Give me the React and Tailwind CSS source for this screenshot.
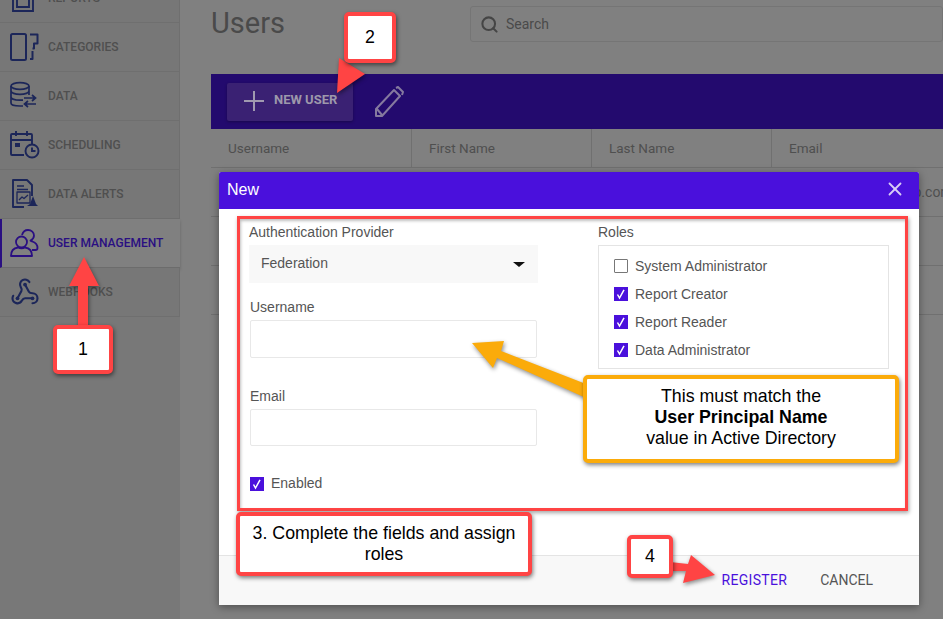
import { Search, X } from "lucide-react";

const ICON = "#1c2659";

function CategoriesIcon() {
  return (
    <svg width="30" height="30" viewBox="0 0 30 30" fill="none" stroke={ICON} strokeWidth="2" strokeLinejoin="round">
      <rect x="1" y="2" width="15" height="26" rx="1.500" />
      <path d="M20 2.500h7.500v9H24v5h-1.500M22.500 19v8h-2.500" />
    </svg>
  );
}

function DataIcon() {
  return (
    <svg width="30" height="30" viewBox="0 0 30 30" fill="none" stroke={ICON} strokeWidth="1.700">
      <ellipse cx="10" cy="5" rx="9" ry="3.400" />
      <path d="M1 5v5c0 1.900 4 3.400 9 3.400s9-1.500 9-3.400V5M1 10v6c0 1.900 4 3.200 9 3.200h3M19 10v4M1 16v6c0 1.900 4 3 9 3h3" />
      <path d="M14 17h11M22 14l3.500 3-3.500 3M26 23H15M18 20l-3.500 3 3.500 3" />
    </svg>
  );
}

function SchedulingIcon() {
  return (
    <svg width="30" height="30" viewBox="0 0 30 30" fill="none" stroke={ICON} strokeWidth="1.900">
      <path d="M14 25H2a1 1 0 0 1-1-1V5a1 1 0 0 1 1-1h19a1 1 0 0 1 1 1v9M1 10h21M6 1v5M17 1v5" />
      <rect x="5" y="13" width="5" height="4" fill={ICON} stroke="none" />
      <circle cx="22" cy="21" r="6.500" />
      <path d="M22 17.500V21h3.500" />
    </svg>
  );
}

function AlertsIcon() {
  return (
    <svg width="30" height="30" viewBox="0 0 30 30" fill="none" stroke={ICON} strokeWidth="1.900" strokeLinejoin="round">
      <path d="M14 28H3V1h14l5 5v11" />
      <path d="M7 7h7M7 10.500h11" strokeWidth="1.300" />
      <rect x="7" y="13" width="13" height="11" strokeWidth="1.300" />
      <path d="M9 21l3-3 2 1.500 4-3.500" strokeWidth="1.300" />
      <path d="M23 17l3 8 2 2H17l3-2z" fill={ICON} stroke="none" />
    </svg>
  );
}

function UsersIcon() {
  return (
    <svg width="30" height="30" viewBox="0 0 30 30" fill="none" stroke="#2a0f82" strokeWidth="1.800" strokeLinejoin="round">
      <circle cx="11.500" cy="14" r="5.500" />
      <path d="M1 28c0-5 3-8 7-8.500 2 1 5 1 7 0 4 .5 7 3.500 7 8.500z" />
      <path d="M12 7c1-3.500 3.500-5 6-5 3.500 0 6 2.500 6 5.500 0 2.500-1.500 4-3.500 5 1 1 1 .8 2 1 3 1 5 3.500 5 6.500 0 1.500-1 2-2 2h-3.500" />
    </svg>
  );
}

function WebhooksIcon() {
  return (
    <svg width="30" height="30" viewBox="0 0 24 24" fill="none" stroke={ICON} strokeWidth="1.700" strokeLinecap="round">
      <path d="M18 16.980h-5.990c-1.100 0-1.950.940-2.480 1.900A4 4 0 0 1 2 17c.010-.700.200-1.400.570-2" />
      <path d="m6 17 3.130-5.780c.530-.970.100-2.180-.500-3.100a4 4 0 1 1 6.890-4.060" />
      <path d="m12 6 3.130 5.730C15.660 12.700 16.900 13 18 13a4 4 0 0 1 0 8" />
      <circle cx="6" cy="17" r="1.500" fill={ICON} stroke="none" />
      <circle cx="18" cy="17" r="1.500" fill={ICON} stroke="none" />
      <circle cx="12" cy="6" r="1.500" fill={ICON} stroke="none" />
    </svg>
  );
}

function ReportsIcon() {
  return (
    <svg width="30" height="30" viewBox="0 0 30 30" fill="none" stroke={ICON} strokeWidth="1.900">
      <path d="M3 1h17l3 3v24H3zM7 10h12v14H7z" />
    </svg>
  );
}

const navItems = [
  { label: "REPORTS", icon: ReportsIcon },
  { label: "CATEGORIES", icon: CategoriesIcon },
  { label: "DATA", icon: DataIcon },
  { label: "SCHEDULING", icon: SchedulingIcon },
  { label: "DATA ALERTS", icon: AlertsIcon },
  { label: "USER MANAGEMENT", icon: UsersIcon, active: true },
  { label: "WEBHOOKS", icon: WebhooksIcon },
];

const columns = [
  { label: "Username", width: "w-[201px]" },
  { label: "First Name", width: "w-[180px]" },
  { label: "Last Name", width: "w-[180px]" },
  { label: "Email", width: "w-[180px]" },
];

const roles = [
  { label: "System Administrator", checked: false },
  { label: "Report Creator", checked: true },
  { label: "Report Reader", checked: true },
  { label: "Data Administrator", checked: true },
];

function Checkbox({ checked }) {
  if (!checked) {
    return <span className="w-[14px] h-[14px] border border-[#777777] bg-white rounded-[1px]" />;
  }
  return (
    <span className="w-[14px] h-[14px] bg-[#4a10dc] flex items-center justify-center">
      <svg width="14" height="14" viewBox="0 0 14 14" fill="none" stroke="white" strokeWidth="1.500">
        <path d="M3.500 7.500l2 3.500L10 2.800" />
      </svg>
    </span>
  );
}

function Callout({ className, color = "red", children }) {
  return (
    <div
      className={`absolute bg-white border-4 rounded-[5px] flex items-center justify-center text-center text-black shadow-[1px_2px_4px_rgba(0,0,0,0.5)] font-["Liberation_Sans",sans-serif] text-[17.800px] leading-[21px] ${
        color === "red" ? "border-[#ff4444]" : "border-[#fbab0a]"
      } ${className}`}
    >
      {children}
    </div>
  );
}

export default function App() {
  return (
    <div className='relative w-[943px] h-[619px] overflow-hidden flex bg-[#808080] font-["Roboto",sans-serif]'>
      {/* Sidebar */}
      <div className="w-[180px] shrink-0 bg-[#787878]">
        <div className="-mt-[26px]">
          {navItems.map((item) => (
            <div
              key={item.label}
              className={`h-[49px] flex items-center gap-[8px] border-b ${
                item.active
                  ? "border-l-2 border-l-[#2a0f82] border-b-[#6c6c6c] bg-[#808080] pl-[8px] shadow-[0_2px_3px_rgba(0,0,0,0.2)]"
                  : "border-[#6f6f6f] bg-[#777777] pl-[10px] border-r border-r-[#6f6f6f]"
              }`}
            >
              <item.icon />
              <span
                className={`text-[12px] font-medium ${
                  item.active ? "text-[#2a0f82]" : "text-[#4f4f4f]"
                }`}
              >
                {item.label}
              </span>
            </div>
          ))}
        </div>
      </div>

      {/* Main */}
      <div className="flex-1 min-w-0 pl-[31px] pt-[6px]">
        <div className="flex items-center h-[36px]">
          <h1 className="w-[259px] shrink-0 text-[29px] text-[#4a4a4a]">Users</h1>
          <div className="flex-1 h-[36px] border border-[#757575] rounded-[3px] flex items-center pl-[9px] gap-[7px] text-[14px] text-[#4a4a4a]">
            <Search size={19} strokeWidth={2.600} className="text-[#454545]" />
            <span>Search</span>
          </div>
        </div>

        <div className="mt-[32px] h-[55px] bg-[#230a6e] flex items-center pl-[16px] gap-[21px]">
          <div className="w-[126px] h-[38px] bg-[#3a2173] rounded-[2px] flex items-center pl-[17px] gap-[10px] shadow-[0_1px_3px_rgba(0,0,0,0.3)]">
            <svg width="20" height="20" viewBox="0 0 20 20" stroke="#a09ab0" strokeWidth="2" className="-mt-[2px]">
              <path d="M10 0v20M0 10h20" />
            </svg>
            <span className="text-[13px] font-bold text-[#9d98ab] whitespace-nowrap -mt-[3px]">NEW USER</span>
          </div>
          <svg width="30" height="32" viewBox="0 0 30 32" fill="none" stroke="#85799f" strokeWidth="2" strokeLinejoin="round">
            <path d="M2 30v-7L20 4l6 6L8 30zM3 23l5 6M22 2l2-1 5 5-1 3" />
          </svg>
        </div>

        <div className="flex h-[39px] border-b border-[#707070] text-[13.500px] text-[#4f4f4f]">
          {columns.map((col) => (
            <div key={col.label} className={`${col.width} shrink-0 flex items-center pl-[17px] border-r border-[#707070]`}>
              {col.label}
            </div>
          ))}
        </div>
        {[0, 1, 2].map((row) => (
          <div key={row} className="h-[49px] border-b border-[#707070] flex items-center pl-[578px] text-[14px] text-[#4f4f4f] whitespace-nowrap">
            {row === 0 ? "admin@examplecorp.com" : ""}
          </div>
        ))}
      </div>

      {/* Modal */}
      <div className='absolute left-[219px] top-[172px] w-[700px] h-[433px] bg-white flex flex-col rounded-t-[2px] shadow-[0_2px_8px_rgba(0,0,0,0.4)] font-["Liberation_Sans",sans-serif]'>
        <div className="h-[37px] shrink-0 bg-[#4a10dc] flex items-center justify-between pl-[8px] pr-[13px] text-white rounded-t-[2px]">
          <span className="text-[16px] -mt-[1px]">New</span>
          <X size={22} strokeWidth={2} className="text-[#d8ccf6] -mt-[3px]" />
        </div>

        <div className="flex-1 flex pt-[15px] pl-[30px] text-[14px] text-[#555555]">
          <div className="w-[289px] shrink-0">
            <label className="block leading-[16px]">Authentication Provider</label>
            <div className="mt-[5px] h-[38px] bg-[#f8f8f8] flex items-center justify-between pl-[12px] pr-[13px]">
              <span className="-mt-[2px]">Federation</span>
              <svg width="12" height="5" viewBox="0 0 12 5" fill="#111111"><path d="M0 0h12L6 5z" /></svg>
            </div>
            <label className="block mt-[16px] ml-[1px] leading-[16px]">Username</label>
            <div className="mt-[5px] ml-[1px] mr-[1px] h-[38px] border border-[#e8e8e8] rounded-[2px]" />
            <label className="block mt-[30px] ml-[1px] leading-[16px]">Email</label>
            <div className="mt-[5px] ml-[1px] mr-[1px] h-[37px] border border-[#e8e8e8] rounded-[2px]" />
            <div className="mt-[27px] ml-[1px] flex items-center gap-[7px]">
              <Checkbox checked />
              <span>Enabled</span>
            </div>
          </div>
          <div className="ml-[60px] w-[291px] shrink-0">
            <label className="block leading-[16px]">Roles</label>
            <div className="mt-[5px] h-[124px] border border-[#e4e4e4] pl-[15px] pt-[13px] flex flex-col gap-[14px]">
              {roles.map((role) => (
                <div key={role.label} className="flex items-center gap-[7px] h-[14px]">
                  <Checkbox checked={role.checked} />
                  <span>{role.label}</span>
                </div>
              ))}
            </div>
          </div>
        </div>

        <div className="h-[50px] shrink-0 bg-[#f8f8f8] border-t border-[#e4e4e4] flex items-center justify-end pr-[46px] gap-[33px] text-[14px] font-['Roboto',sans-serif]">
          <span className="text-[#4a10dc] tracking-[0.300px]">REGISTER</span>
          <span className="text-[#555555]">CANCEL</span>
        </div>
      </div>

      {/* Annotations */}
      <div className="absolute left-[237px] top-[216px] w-[671px] h-[295px] border-[3px] border-[#ff4444] shadow-[1px_2px_4px_rgba(0,0,0,0.35),inset_1px_2px_3px_rgba(0,0,0,0.25)]" />

      <svg className="absolute left-0 top-0 drop-shadow-[1px_2px_2px_rgba(0,0,0,0.45)]" width="943" height="619" fill="none">
        <path d="M84 257L99 286H88V328H78V286H69Z" fill="#ff4444" />
        <path d="M337 93L339 58L365 74Z" fill="#ff4444" />
        <path d="M715 575L683 583L686 571L670 571V562L688 564L691 555Z" fill="#ff4444" />
        <path d="M472 343L504 341L501 351L586 384L586 398L497 358L493 368Z" fill="#fbab0a" />
      </svg>

      <Callout className="left-[53px] top-[325px] w-[60px] h-[49px]">1</Callout>
      <Callout className="left-[344px] top-[12px] w-[52px] h-[51px]">2</Callout>
      <Callout className="left-[236px] top-[512px] w-[296px] h-[64px] px-[8px]">
        3. Complete the fields and assign roles
      </Callout>
      <Callout className="left-[627px] top-[535px] w-[46px] h-[43px]">4</Callout>
      <Callout color="orange" className="left-[583px] top-[375px] w-[316px] h-[88px] pb-[3px]">
        <div>
          This must match the
          <br />
          <b>User Principal Name</b>
          <br />
          value in Active Directory
        </div>
      </Callout>
    </div>
  );
}
